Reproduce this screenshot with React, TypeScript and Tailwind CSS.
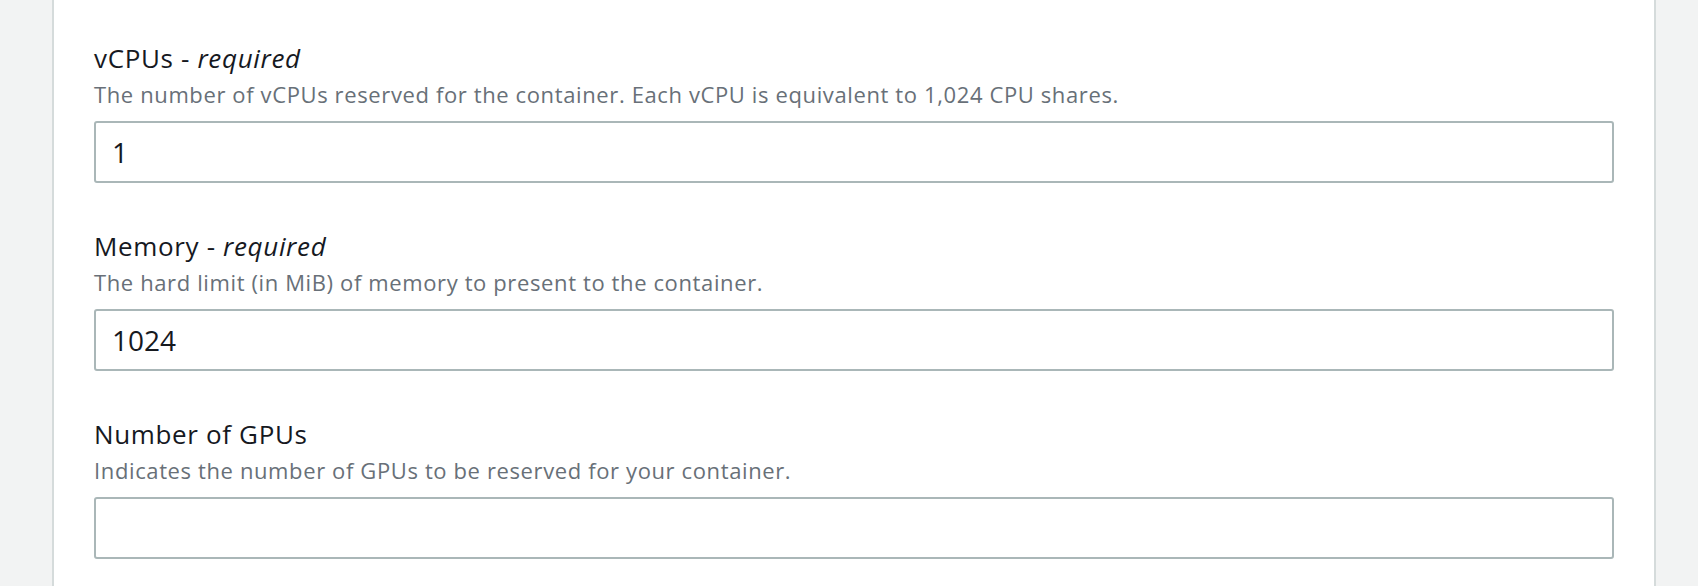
import React from "react";

const fields = [
  {
    label: "vCPUs",
    required: true,
    desc: "The number of vCPUs reserved for the container. Each vCPU is equivalent to 1,024 CPU shares.",
    value: "1",
  },
  {
    label: "Memory",
    required: true,
    desc: "The hard limit (in MiB) of memory to present to the container.",
    value: "1024",
  },
  {
    label: "Number of GPUs",
    required: false,
    desc: "Indicates the number of GPUs to be reserved for your container.",
    value: "",
  },
];

export default function App() {
  return (
    <div
      className="flex h-[586px] w-full overflow-hidden bg-[#f2f3f3]"
      style={{ fontFamily: '"Open Sans", "Noto Sans", Arial, sans-serif' }}
    >
      <div className="ml-[52px] w-[1604px] shrink-0 border-x-2 border-[#d5dbdb] bg-white px-[40px] pt-[40px]">
        <div className="flex flex-col gap-[45px]">
          {fields.map((f) => (
            <div key={f.label} className="flex flex-col">
              <div className="text-[26px] leading-[36px] tracking-[0.65px] text-[#16191f]">
                {f.label}
                {f.required && (
                  <>
                    {" - "}
                    <i>required</i>
                  </>
                )}
              </div>
              <div className="mt-[3px] text-[22px] leading-[30px] tracking-[0.62px] text-[#687078]">{f.desc}</div>
              <div className="mt-[12px] flex h-[62px] items-center rounded-[3px] border-2 border-[#aab7b8] px-[16px] text-[28px] text-[#16191f]">
                {f.value}
              </div>
            </div>
          ))}
        </div>
      </div>
    </div>
  );
}
